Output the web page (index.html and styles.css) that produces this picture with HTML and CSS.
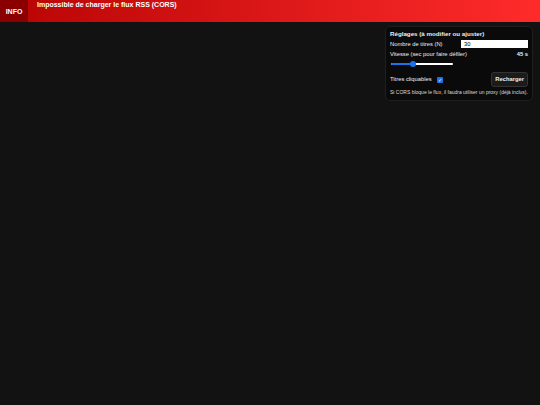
FILE: index.html
```html
<!DOCTYPE html>
<html lang="fr">
<head>
  <meta charset="UTF-8" />
  <title>Ticker RSS</title>
  <link rel="stylesheet" href="styles.css">
</head>
<body>
  <div class="ticker">
    <div class="ticker-label">INFO</div>
    <div class="ticker-track">Impossible de charger le flux RSS (CORS)</div>
  </div>

  <div class="panel">
    <div class="panel-title">Réglages (à modifier ou ajuster)</div>

    <div class="row">
      <label for="count">Nombre de titres (N)</label>
      <input type="text" id="count" value="30" />
    </div>

    <div class="row">
      <span>Vitesse (sec pour faire défiler)</span>
      <span class="value">45 s</span>
    </div>

    <div class="slider">
      <div class="slider-fill"></div>
      <div class="slider-thumb"></div>
    </div>

    <div class="row row-actions">
      <label class="check">Titres cliquables <span class="box">&#10003;</span></label>
      <button type="button">Recharger</button>
    </div>

    <p class="note">Si CORS bloque le flux, il faudra utiliser un proxy (déjà inclus).</p>
  </div>
</body>
</html>
```

FILE: styles.css
```css
body {
  margin: 0;
  background: #121212;
  font-family: "Liberation Sans", Arial, sans-serif;
  color: #eee;
}

.ticker {
  display: flex;
  height: 22px;
  background: linear-gradient(90deg, #b80404, #ff2b2b);
}

.ticker-label {
  width: 28px;
  background: #8a0000;
  display: flex;
  align-items: center;
  justify-content: center;
  font-weight: bold;
  font-size: 7px;
  color: #fff;
}

.ticker-track {
  padding: 1px 9px;
  font-weight: bold;
  font-size: 7px;
  color: #fff;
}

.panel {
  position: absolute;
  top: 26px;
  right: 7px;
  width: 138px;
  padding: 3px 4px 5px 4px;
  background: #0a0a0a;
  border: 1px solid #1f1f1f;
  border-radius: 5px;
  font-size: 5.8px;
  line-height: 7px;
}

.panel-title {
  font-weight: bold;
  font-size: 6.2px;
  margin-bottom: 3px;
}

.row {
  display: flex;
  justify-content: space-between;
  align-items: center;
  margin-bottom: 3px;
}

.row input {
  width: 67px;
  height: 8px;
  box-sizing: border-box;
  border: none;
  padding: 0 3px;
  font-size: 5.8px;
  font-family: inherit;
  background: #fff;
  color: #000;
}

.value {
  font-weight: bold;
}

.slider {
  position: relative;
  width: 62px;
  height: 2px;
  background: #fff;
  border-radius: 1px;
  margin: 5px 0 7px 1px;
}

.slider-fill {
  width: 22px;
  height: 2px;
  background: #1a73e8;
  border-radius: 1px;
}

.slider-thumb {
  position: absolute;
  left: 19px;
  top: -2px;
  width: 6px;
  height: 6px;
  border-radius: 50%;
  background: #1a73e8;
}

.row-actions {
  margin-bottom: 2px;
}

.check {
  display: flex;
  align-items: center;
  gap: 5px;
}

.box {
  width: 6px;
  height: 6px;
  border-radius: 1px;
  background: #1a73e8;
  color: #fff;
  font-size: 5px;
  line-height: 6px;
  text-align: center;
}

button {
  background: #1b1b1b;
  color: #eee;
  border: 1px solid #333;
  border-radius: 3px;
  font-family: inherit;
  font-weight: bold;
  font-size: 5.8px;
  line-height: 7px;
  padding: 3px 3px;
}

.note {
  margin: 0;
  font-size: 5px;
  line-height: 6px;
  color: #ddd;
}
```
